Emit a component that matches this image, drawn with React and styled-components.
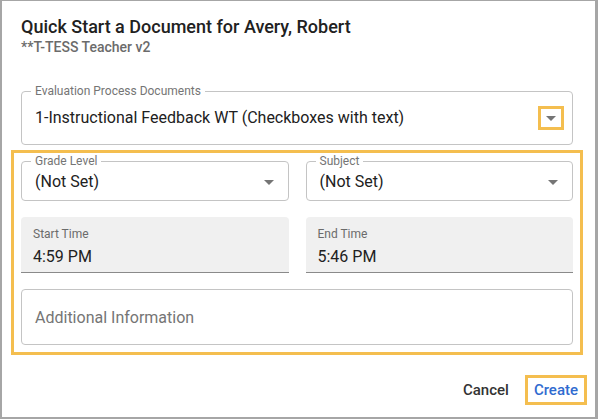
import React from 'react';
import styled, { createGlobalStyle } from 'styled-components';

const GlobalStyle = createGlobalStyle`
  html, body {
    margin: 0;
    padding: 0;
    background: #ffffff;
  }
  body {
    font-family: Roboto, "Liberation Sans", Arial, sans-serif;
  }
  * {
    box-sizing: border-box;
  }
`;

const Dialog = styled.div`
  width: 598px;
  height: 419px;
  border-style: solid;
  border-color: #a6a6a6;
  border-width: 1px 3px 2px 2px;
  padding: 0 8px 0 9px;
  display: flex;
  flex-direction: column;
  background: #fff;
`;

const Header = styled.div`
  padding: 16px 14px 0 10px;
`;

const Title = styled.h2`
  margin: 0;
  font-size: 18px;
  line-height: 20px;
  font-weight: 500;
  color: #212121;
`;

const Subtitle = styled.div`
  margin-top: 1px;
  font-size: 14px;
  line-height: 18px;
  font-weight: 500;
  color: #6b6b6b;
`;

const Outlined = styled.fieldset`
  margin: 0;
  min-width: 0;
  border: 1px solid #c4c4c4;
  border-radius: 4px;
  padding: ${(p) => (p.$small ? '2px 14px 6px 13px' : '8px 8px 14px 13px')};
  ${(p) => p.$wide && 'margin: 28px 14px 0 10px;'}
`;

const Legend = styled.legend`
  margin-left: -4px;
  padding: 0 4px;
  font-size: 12px;
  line-height: 14px;
  color: #757575;
`;

const SelectRow = styled.div`
  display: flex;
  align-items: center;
  justify-content: space-between;
  height: 24px;
`;

const Value = styled.span`
  font-size: 16px;
  line-height: 24px;
  color: #212121;
  white-space: nowrap;
`;

const ArrowBox = styled.span`
  display: flex;
  align-items: center;
  justify-content: center;
  width: 26px;
  height: 24px;
  ${(p) => p.$highlight && 'border: 3px solid #f4be4f;'}
  margin-right: ${(p) => (p.$highlight ? '0' : '-8px')};
`;

const Highlight = styled.div`
  margin: 5px 4px 0 0;
  border: 3px solid #f4be4f;
  padding: 1px 7px 7px;
  display: flex;
  flex-direction: column;
  gap: 16px;
`;

const Row = styled.div`
  display: grid;
  grid-template-columns: 1fr 1fr;
  column-gap: 17px;
`;

const Filled = styled.div`
  height: 56px;
  background: #f0f0f0;
  border-radius: 4px 4px 0 0;
  border-bottom: 1px solid #8a8a8a;
  padding: 10px 12px 0;
  display: flex;
  flex-direction: column;
`;

const FilledLabel = styled.span`
  font-size: 12px;
  line-height: 14px;
  color: #6b6b6b;
`;

const FilledValue = styled.span`
  font-size: 16px;
  line-height: 24px;
  margin-top: 4px;
  color: #212121;
`;

const TextArea = styled.div`
  height: 56px;
  border: 1px solid #c4c4c4;
  border-radius: 4px;
  padding: 0 13px;
  display: flex;
  align-items: center;
  font-size: 16px;
  color: #757575;
`;

const Footer = styled.div`
  margin-top: 20px;
  display: flex;
  justify-content: flex-end;
  align-items: center;
  gap: 16px;
`;

const Button = styled.button`
  font-family: inherit;
  font-size: 15px;
  font-weight: 500;
  line-height: 24px;
  background: none;
  cursor: pointer;
  padding: 0 ${(p) => (p.$highlight ? '6px' : '0')};
  height: 30px;
  border: ${(p) => (p.$highlight ? '3px solid #f4be4f' : 'none')};
  color: ${(p) => (p.$primary ? '#2f6bd0' : '#333333')};
`;

const Caret = () => (
  <svg width="10" height="5" viewBox="0 0 10 5">
    <path d="M0 0 L5 5 L10 0 Z" fill="#757575" />
  </svg>
);

const SelectField = ({ label, value, small, wide, highlight }) => (
  <Outlined $small={small} $wide={wide}>
    <Legend>{label}</Legend>
    <SelectRow>
      <Value>{value}</Value>
      <ArrowBox $highlight={highlight}>
        <Caret />
      </ArrowBox>
    </SelectRow>
  </Outlined>
);

const TimeField = ({ label, value }) => (
  <Filled>
    <FilledLabel>{label}</FilledLabel>
    <FilledValue>{value}</FilledValue>
  </Filled>
);

const App = () => (
  <>
    <GlobalStyle />
    <Dialog>
      <Header>
        <Title>Quick Start a Document for Avery, Robert</Title>
        <Subtitle>**T-TESS Teacher v2</Subtitle>
      </Header>
      <SelectField
        wide
        highlight
        label="Evaluation Process Documents"
        value="1-Instructional Feedback WT (Checkboxes with text)"
      />
      <Highlight>
        <Row>
          <SelectField small label="Grade Level" value="(Not Set)" />
          <SelectField small label="Subject" value="(Not Set)" />
        </Row>
        <Row>
          <TimeField label="Start Time" value="4:59 PM" />
          <TimeField label="End Time" value="5:46 PM" />
        </Row>
        <TextArea>Additional Information</TextArea>
      </Highlight>
      <Footer>
        <Button>Cancel</Button>
        <Button $primary $highlight>Create</Button>
      </Footer>
    </Dialog>
  </>
);

export default App;
